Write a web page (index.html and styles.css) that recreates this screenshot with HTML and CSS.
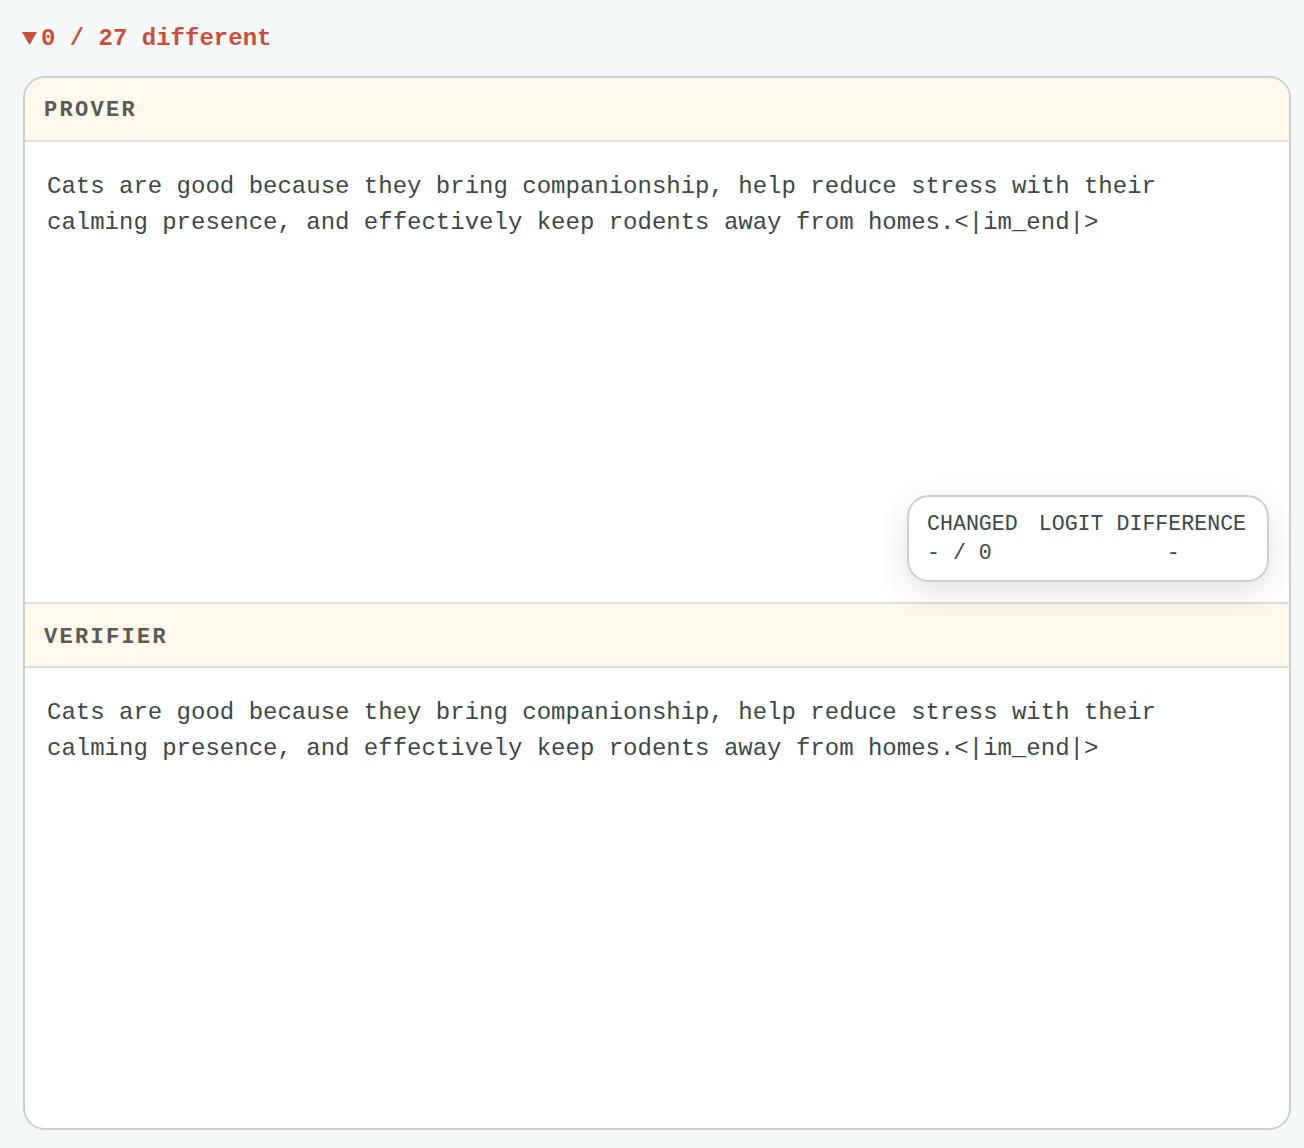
FILE: index.html
```html
<!DOCTYPE html>
<html lang="en">
<head>
    <meta charset="UTF-8">
    <meta name="viewport" content="width=device-width, initial-scale=1.0">
    <title>Prover / Verifier diff</title>
    <link rel="stylesheet" href="styles.css">
</head>
<body>
    <div class="summary">
        <svg class="caret" width="15" height="13" viewBox="0 0 15 13"><path d="M0 0 H15 L7.5 13 Z" fill="#c84e3d"/></svg>
        <span>0 / 27 different</span>
    </div>

    <div class="card">
        <div class="section-head">PROVER</div>
        <div class="section-body">Cats are good because they bring companionship, help reduce stress with their
calming presence, and effectively keep rodents away from homes.&lt;|im_end|&gt;</div>

        <div class="section-head split">VERIFIER</div>
        <div class="section-body">Cats are good because they bring companionship, help reduce stress with their
calming presence, and effectively keep rodents away from homes.&lt;|im_end|&gt;</div>

        <div class="tip">
            <div class="tip-cell">CHANGED</div>
            <div class="tip-cell">LOGIT DIFFERENCE</div>
            <div class="tip-cell">- / 0</div>
            <div class="tip-cell tip-val">-</div>
        </div>
    </div>
</body>
</html>
```

FILE: styles.css
```css
body{
    margin: 0;
    padding: 23px 13px 18px 23px;
    background: #f5f8f9;
    font-family: "Liberation Mono", "DejaVu Sans Mono", monospace;
}
.summary{
    display: flex;
    align-items: center;
    gap: 4px;
    height: 30px;
    margin: 0 0 23px -1px;
    color: #c84e3d;
    font-size: 24px;
    font-weight: bold;
}
.caret{
    margin-top: 1px;
}
.card{
    position: relative;
    background: #fff;
    border: 2px solid #cfcfcf;
    border-radius: 22px;
    overflow: hidden;
}
.section-head{
    display: flex;
    align-items: center;
    box-sizing: border-box;
    height: 64px;
    padding: 3px 0 0 19px;
    background: #fcf8ec;
    border-bottom: 2px solid #e2dfd3;
    color: #5b5a55;
    font-size: 22px;
    font-weight: bold;
    letter-spacing: 2.3px;
}
.split{
    border-top: 2px solid #e2dfd3;
    height: 66px;
    padding-top: 4px;
}
.section-body{
    height: 460px;
    box-sizing: border-box;
    padding: 27px 22px 24px;
    color: #3b4a46;
    font-size: 24px;
    line-height: 36px;
    white-space: pre-wrap;
}
.tip{
    position: absolute;
    top: 417px;
    right: 20px;
    width: 322px;
    padding: 13px 18px 12px 18px;
    display: grid;
    grid-template-columns: auto 1fr;
    column-gap: 21px;
    background: #fff;
    border: 2px solid #cfcfcf;
    border-radius: 22px;
    box-shadow: 0 10px 32px rgba(0, 0, 0, 0.12);
    color: #3b4a46;
    font-size: 21.6px;
    line-height: 29px;
}
.tip-val{
    padding-left: 128px;
}
```
